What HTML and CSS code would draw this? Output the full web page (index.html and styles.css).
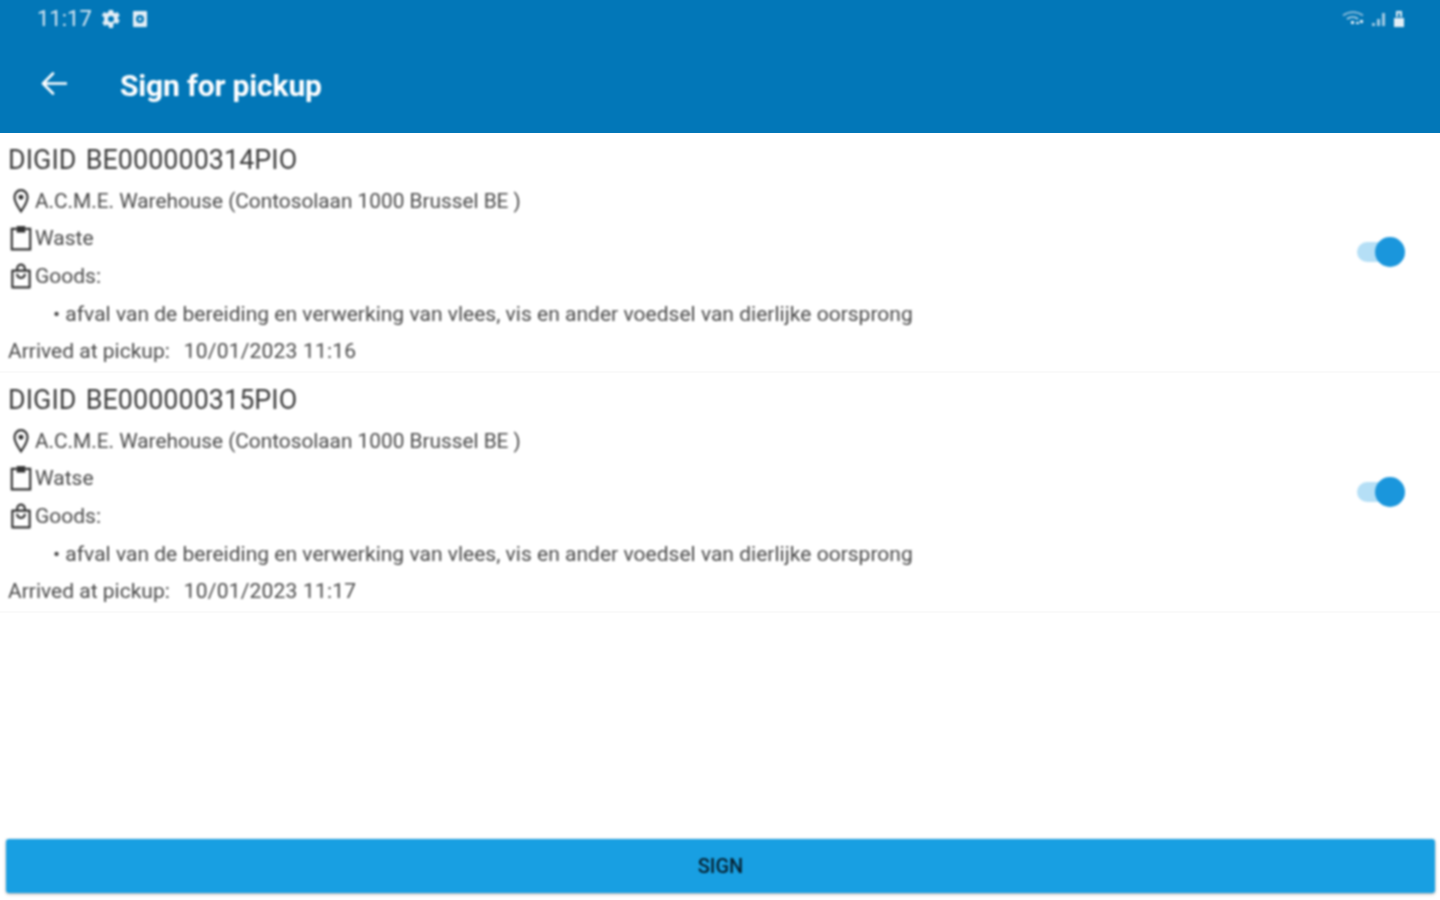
FILE: index.html
```html
<!DOCTYPE html>
<html lang="en">
<head>
<meta charset="utf-8">
<title>Sign for pickup</title>
<link rel="stylesheet" href="styles.css">
</head>
<body>
<div class="screen">
  <header class="appbar">
    <div class="statusbar">
      <div class="status-left">
        <span class="clock">11:17</span>
        <svg class="status-icon" viewBox="0 0 20 20"><path fill="#e3eef6" fill-rule="evenodd" d="M8 1h4l.5 2.400 1.700.8 2.200-1.200 2.400 3.400-1.900 1.600v2l1.900 1.600-2.400 3.400-2.200-1.200-1.700.8L12 19H8l-.5-2.400-1.700-.8-2.200 1.200-2.400-3.400 1.900-1.600V10 8L.7 6.400 3.100 3l2.200 1.200 1.700-.8zM10 7a3 3 0 1 0 0 6 3 3 0 0 0 0-6z"/></svg>
        <svg class="status-icon" viewBox="0 0 20 20"><path fill="#e3eef6" fill-rule="evenodd" d="M4 2h12a1 1 0 0 1 1 1v14a1 1 0 0 1-1 1H4a1 1 0 0 1-1-1V3a1 1 0 0 1 1-1zm6 4a4 4 0 1 0 4 4 4 4 0 0 0-4-4zm0 2.500a1.500 1.500 0 1 1-1.500 1.500 1.500 1.500 0 0 1 1.500-1.500z"/></svg>
      </div>
      <div class="status-right">
        <svg class="sys-wifi" viewBox="0 0 24 16"><path fill="none" stroke="#8fbedb" stroke-width="1.600" d="M1 4.500C7 0 15 0 21 4.500"/><path fill="none" stroke="#b6d5e8" stroke-width="1.800" d="M5 8c3.500-2.500 8-2.500 11 0"/><rect x="9" y="10" width="3" height="3" fill="#e3eef6"/><rect x="14" y="11" width="3" height="2" fill="#e3eef6"/><rect x="18" y="9" width="3" height="3" fill="#e3eef6"/></svg>
        <svg class="sys-signal" viewBox="0 0 16 16"><path fill="#a3cbe3" d="M1 12h3v3H1zM6 8h3v7H6zM11 2h3v13h-3z"/></svg>
        <svg class="sys-lock" viewBox="0 0 14 18"><path fill="#e3eef6" d="M4 1h6v6H8V3H6v4H4zM2 8h10v9H2z"/></svg>
      </div>
    </div>
    <div class="toolbar">
      <svg class="back" viewBox="0 0 26 26"><path fill="none" stroke="#fff" stroke-width="2.600" stroke-linecap="round" stroke-linejoin="round" d="M25 12.500H2.500M12 2.500 2 12.500l10 10"/></svg>
      <h1 class="title">Sign for pickup</h1>
    </div>
  </header>

  <main class="list">
    <section class="row">
      <div class="row-body">
        <div class="digid">DIGID BE000000314PIO</div>
        <div class="line"><svg class="ico" viewBox="0 0 24 24"><path fill="none" stroke="#333" stroke-width="2" d="M12 2C8.500 2 6 4.800 6 8.500 6 13 12 21.500 12 21.500s6-8.500 6-13C18 4.800 15.500 2 12 2z"/><circle cx="12" cy="8.500" r="2.300" fill="#333"/></svg><span class="address">A.C.M.E. Warehouse (Contosolaan 1000 Brussel BE )</span></div>
        <div class="line"><svg class="ico" viewBox="0 0 24 24"><path fill="none" stroke="#333" stroke-width="2" d="M8 3.500H3.500v19h17v-19H16"/><path fill="#333" d="M8 1h8v6H8z"/></svg><span>Waste</span></div>
        <div class="line"><svg class="ico" viewBox="0 0 24 24"><path fill="none" stroke="#333" stroke-width="2" stroke-linejoin="round" d="M4 7h16v15.500H4z"/><path fill="none" stroke="#333" stroke-width="2" d="M8.500 7V5a3.500 3.500 0 0 1 7 0v2"/><path fill="none" stroke="#333" stroke-width="2" d="M8.500 10c0 5 7 5 7 0"/></svg><span>Goods:</span></div>
        <div class="line detail">• afval van de bereiding en verwerking van vlees, vis en ander voedsel van dierlijke oorsprong</div>
        <div class="line arrived"><span class="arrived-label">Arrived at pickup:</span><span class="arrived-date">10/01/2023 11:16</span></div>
      </div>
      <div class="switch"><span class="thumb"></span></div>
    </section>
    <section class="row">
      <div class="row-body">
        <div class="digid">DIGID BE000000315PIO</div>
        <div class="line"><svg class="ico" viewBox="0 0 24 24"><path fill="none" stroke="#333" stroke-width="2" d="M12 2C8.500 2 6 4.800 6 8.500 6 13 12 21.500 12 21.500s6-8.500 6-13C18 4.800 15.500 2 12 2z"/><circle cx="12" cy="8.500" r="2.300" fill="#333"/></svg><span class="address">A.C.M.E. Warehouse (Contosolaan 1000 Brussel BE )</span></div>
        <div class="line"><svg class="ico" viewBox="0 0 24 24"><path fill="none" stroke="#333" stroke-width="2" d="M8 3.500H3.500v19h17v-19H16"/><path fill="#333" d="M8 1h8v6H8z"/></svg><span>Watse</span></div>
        <div class="line"><svg class="ico" viewBox="0 0 24 24"><path fill="none" stroke="#333" stroke-width="2" stroke-linejoin="round" d="M4 7h16v15.500H4z"/><path fill="none" stroke="#333" stroke-width="2" d="M8.500 7V5a3.500 3.500 0 0 1 7 0v2"/><path fill="none" stroke="#333" stroke-width="2" d="M8.500 10c0 5 7 5 7 0"/></svg><span>Goods:</span></div>
        <div class="line detail">• afval van de bereiding en verwerking van vlees, vis en ander voedsel van dierlijke oorsprong</div>
        <div class="line arrived"><span class="arrived-label">Arrived at pickup:</span><span class="arrived-date">10/01/2023 11:17</span></div>
      </div>
      <div class="switch"><span class="thumb"></span></div>
    </section>
  </main>

  <footer class="actions">
    <button class="sign" type="button">SIGN</button>
  </footer>
</div>
</body>
</html>
```

FILE: styles.css
```css
* { box-sizing: border-box; }
html, body { margin: 0; padding: 0; height: 100%; background: #fff; }
body { font-family: Roboto, "Liberation Sans", sans-serif; overflow: hidden; }
.screen { width: 1440px; height: 900px; display: flex; flex-direction: column; }

.appbar { height: 133px; background: #0277b8; flex: none; display: flex; flex-direction: column; }
.statusbar { height: 38px; padding: 0 34px 0 37px; display: flex; align-items: center; justify-content: space-between; filter: blur(.8px); }
.status-left { display: flex; align-items: center; }
.clock { font-size: 22px; color: #dbe9f3; margin-right: 9px; line-height: 38px; }
.status-icon { width: 20px; height: 20px; margin-right: 9px; }
.status-right { display: flex; align-items: center; gap: 5px; }
.sys-wifi { width: 24px; height: 16px; }
.sys-signal { width: 16px; height: 16px; }
.sys-lock { width: 14px; height: 18px; }

.toolbar { height: 94px; padding: 0 0 0 41px; display: flex; align-items: center; margin-top: 3px; filter: blur(.8px); }
.back { width: 26px; height: 26px; margin-top: -7px; margin-right: 53px; }
.title { margin: 0; font-size: 30px; line-height: 36px; font-weight: 700; letter-spacing: -.15px; color: #fff; margin-top: -3px; }

.list { flex: 1; }
.row { height: 240px; padding: 8px 35px 0 8px; border-bottom: 2px solid #fafafa; display: flex; align-items: center; justify-content: space-between; }
.row-body { flex: 1; filter: blur(.8px); align-self: flex-start; }
.digid { font-size: 26.800px; word-spacing: 2.500px; letter-spacing: .1px; line-height: 38px; margin-bottom: 3px; color: #3c3c3c; font-weight: 400; }
.line { height: 37.600px; display: flex; align-items: center; font-size: 21px; color: #4a4a4a; }
.address { font-size: 20.800px; }
.ico { width: 26px; height: 26px; flex: none; margin-right: 1px; }
.detail { padding-left: 45px; letter-spacing: .02px; }
.arrived-label { margin-right: 14px; }
.arrived-date { letter-spacing: .2px; }

.switch { position: relative; width: 48px; height: 20px; border-radius: 10px; background: #b5dff6; margin-bottom: 8px; filter: blur(.8px); }
.thumb { position: absolute; right: 0; top: -5px; width: 30px; height: 30px; border-radius: 50%; background: #1a96dc; }

.actions { flex: none; padding: 0 5px 7px 6px; }
.sign { display: block; width: 100%; height: 54px; border: 0; border-radius: 3px; background: #189fe2; color: #06202f; font-family: Roboto, sans-serif; font-size: 20px; font-weight: 500; box-shadow: 0 1px 3px rgba(0,0,0,.35); filter: blur(.8px); }
```
